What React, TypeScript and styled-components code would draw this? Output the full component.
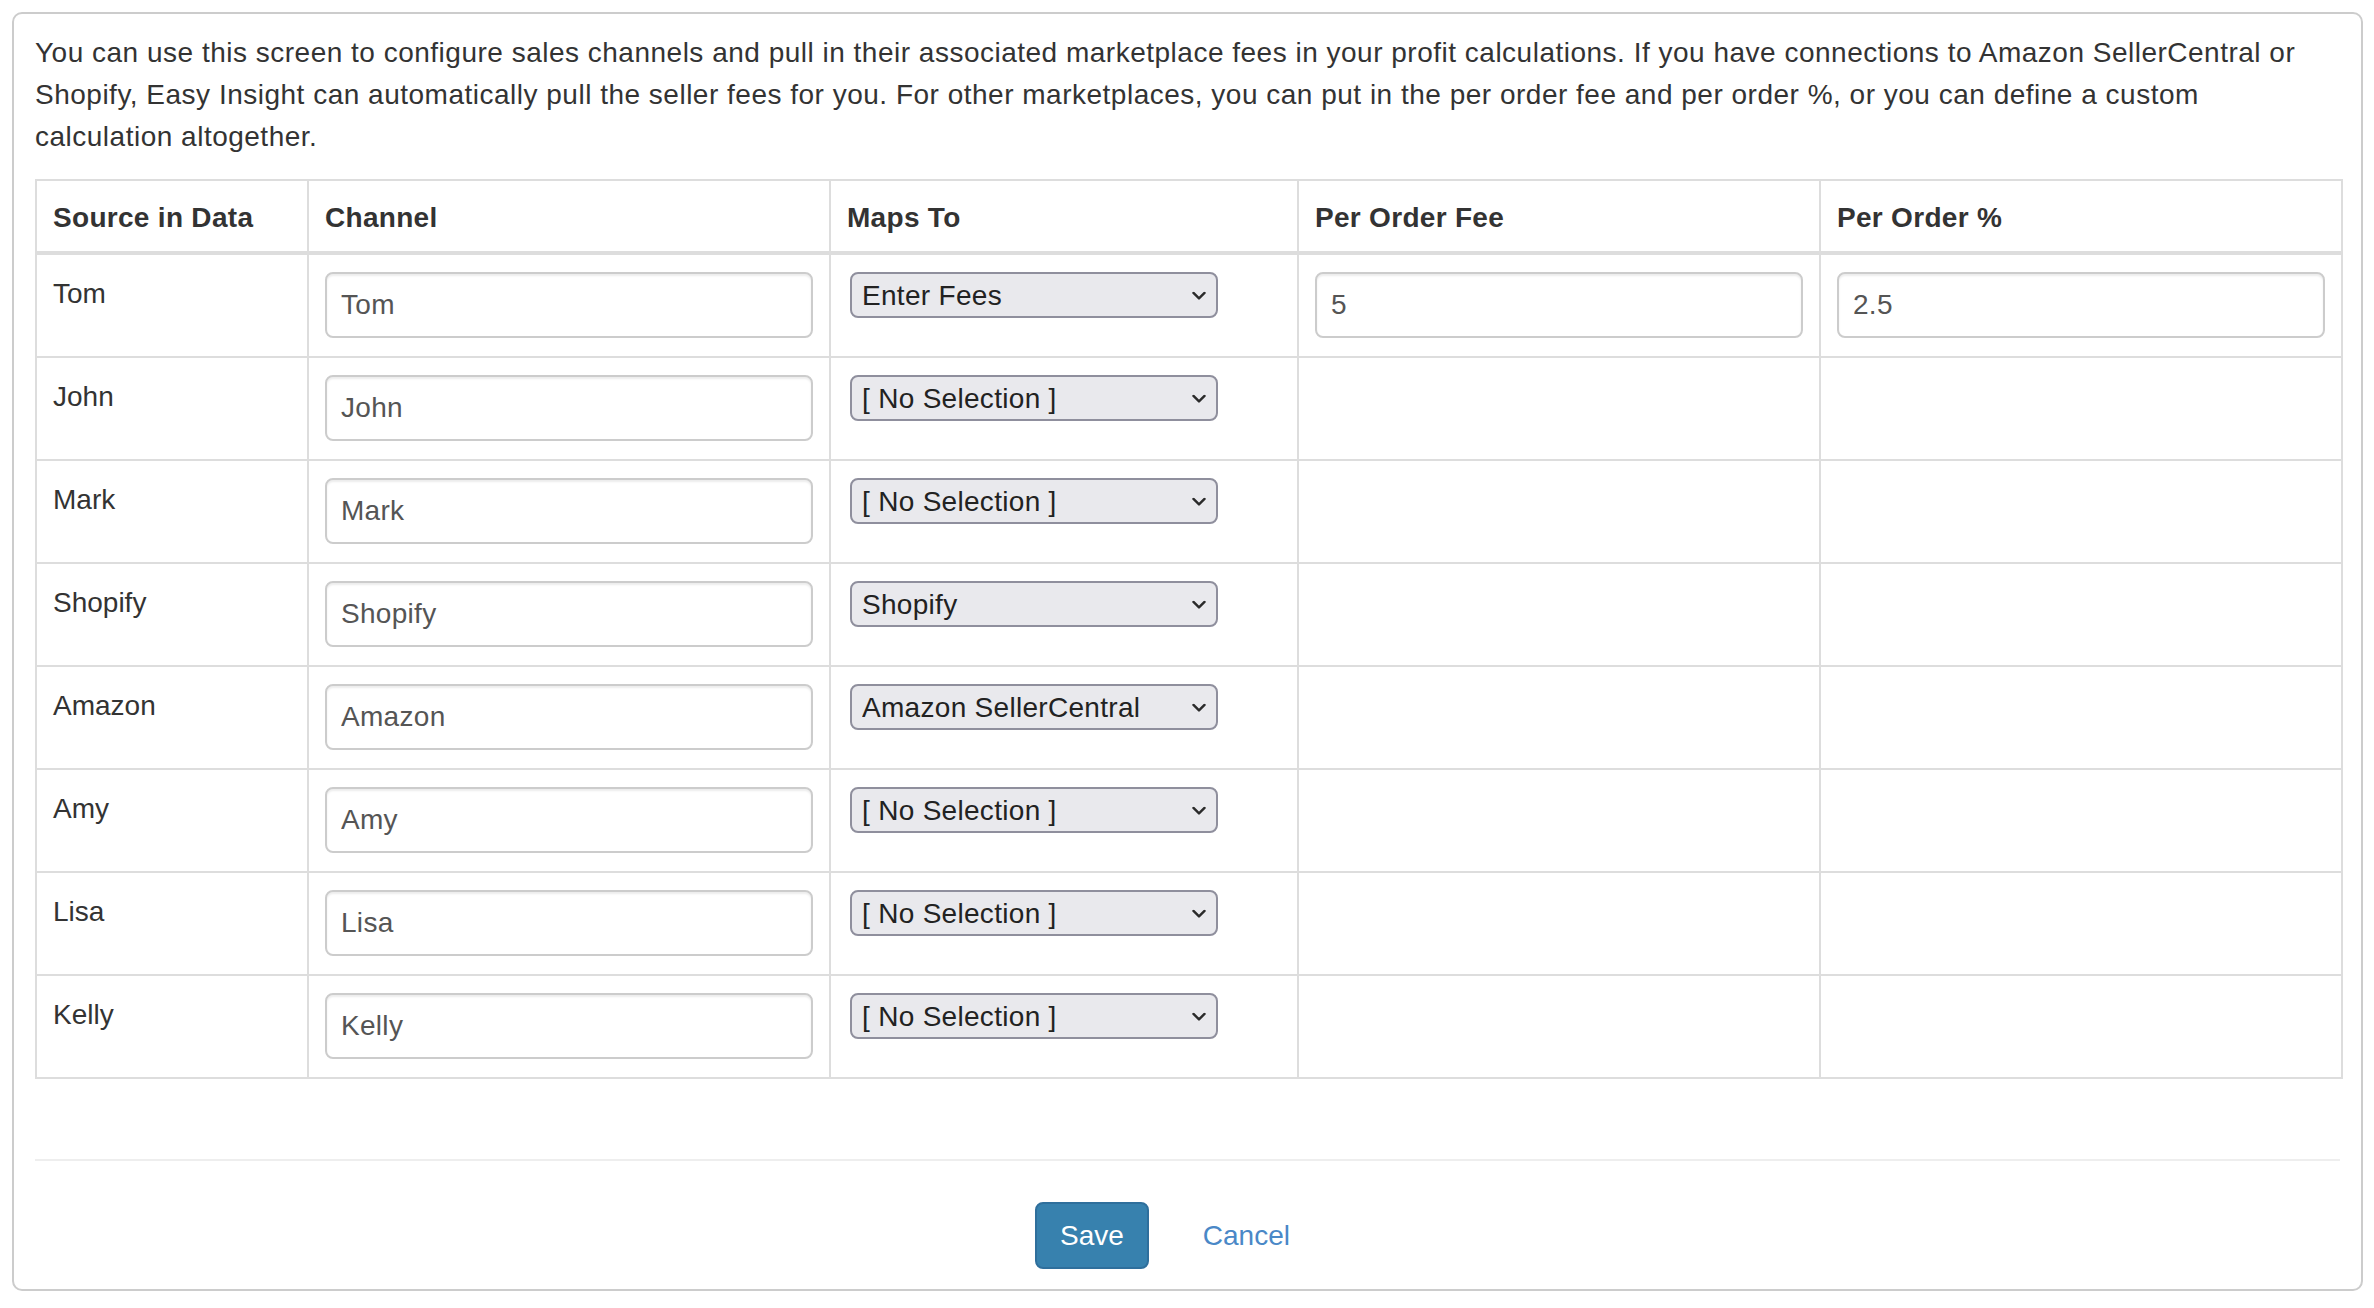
import styled, { createGlobalStyle } from "styled-components";

type Mapping = "Enter Fees" | "[ No Selection ]" | "Shopify" | "Amazon SellerCentral";

interface ChannelRow {
  source: string;
  mapsTo: Mapping;
  fee?: string;
  percent?: string;
}

const rows: ChannelRow[] = [
  { source: "Tom", mapsTo: "Enter Fees", fee: "5", percent: "2.5" },
  { source: "John", mapsTo: "[ No Selection ]" },
  { source: "Mark", mapsTo: "[ No Selection ]" },
  { source: "Shopify", mapsTo: "Shopify" },
  { source: "Amazon", mapsTo: "Amazon SellerCentral" },
  { source: "Amy", mapsTo: "[ No Selection ]" },
  { source: "Lisa", mapsTo: "[ No Selection ]" },
  { source: "Kelly", mapsTo: "[ No Selection ]" },
];

const options: Mapping[] = ["[ No Selection ]", "Enter Fees", "Shopify", "Amazon SellerCentral"];

const columns = [
  { label: "Source in Data", width: 272 },
  { label: "Channel", width: 522 },
  { label: "Maps To", width: 468 },
  { label: "Per Order Fee", width: 522 },
  { label: "Per Order %", width: 522 },
];

export default function App() {
  return (
    <Page>
      <GlobalStyle />
      <Card>
        <Intro>
          You can use this screen to configure sales channels and pull in their associated marketplace fees in your
          profit calculations. If you have connections to Amazon SellerCentral or Shopify, Easy Insight can
          automatically pull the seller fees for you. For other marketplaces, you can put in the per order fee and per
          order %, or you can define a custom calculation altogether.
        </Intro>

        <Table>
          <colgroup>
            {columns.map((c) => (
              <Col key={c.label} $width={c.width} />
            ))}
          </colgroup>
          <thead>
            <tr>
              {columns.map((c) => (
                <Th key={c.label}>{c.label}</Th>
              ))}
            </tr>
          </thead>
          <tbody>
            {rows.map((r) => (
              <tr key={r.source}>
                <Td>{r.source}</Td>
                <Td>
                  <TextInput defaultValue={r.source} />
                </Td>
                <Td>
                  <SelectWrap>
                    <Select defaultValue={r.mapsTo}>
                      {options.map((o) => (
                        <option key={o}>{o}</option>
                      ))}
                    </Select>
                    <Chevron width="14" height="9" viewBox="0 0 14 9">
                      <path d="M1.5 1.5 L7 7 L12.5 1.5" fill="none" stroke="#2b2b2b" strokeWidth="2.4" strokeLinecap="round" strokeLinejoin="round" />
                    </Chevron>
                  </SelectWrap>
                </Td>
                <Td>{r.fee !== undefined && <TextInput defaultValue={r.fee} />}</Td>
                <Td>{r.percent !== undefined && <TextInput defaultValue={r.percent} />}</Td>
              </tr>
            ))}
          </tbody>
        </Table>

        <Divider />

        <Footer>
          <SaveButton type="button">Save</SaveButton>
          <LinkButton type="button">Cancel</LinkButton>
        </Footer>
      </Card>
    </Page>
  );
}

const GlobalStyle = createGlobalStyle`
  html, body {
    margin: 0;
    padding: 0;
    background: #fff;
  }
  body {
    font-family: "Liberation Sans", Arial, Helvetica, sans-serif;
    color: #333;
  }
  * {
    box-sizing: border-box;
  }
`;

const Page = styled.div`
  padding: 12px 11px 0 12px;
`;

const Card = styled.div`
  border: 2px solid #ccc;
  border-radius: 10px;
  padding: 18px 21px 20px 21px;
  background: #fff;
`;

const Intro = styled.p`
  margin: 0 0 21px 0;
  font-size: 28px;
  letter-spacing: 0.5px;
  line-height: 42px;
  color: #333;
`;

const Table = styled.table`
  width: 100%;
  table-layout: fixed;
  border-collapse: collapse;
  border: 2px solid #ddd;
  font-size: 28px;
  line-height: 42px;
`;

const Col = styled.col<{ $width: number }>`
  width: ${(p) => p.$width}px;
`;

const Th = styled.th`
  text-align: left;
  font-weight: bold;
  letter-spacing: 0.3px;
  padding: 16px 16px 12px 16px;
  border: 2px solid #ddd;
  border-bottom: 4px solid #ddd;
  color: #333;
`;

const Td = styled.td`
  vertical-align: top;
  padding: 18px 16px 18px 16px;
  border: 2px solid #ddd;
  color: #333;
`;

const TextInput = styled.input`
  display: block;
  width: 100%;
  height: 66px;
  padding: 0 14px;
  margin-top: -1px;
  font-family: inherit;
  font-size: 28px;
  letter-spacing: 0.3px;
  color: #555;
  background: #fff;
  border: 2px solid #ccc;
  border-radius: 8px;
  box-shadow: inset 0 2px 2px rgba(0, 0, 0, 0.075);
  outline: none;
`;

const SelectWrap = styled.div`
  position: relative;
  width: 368px;
  margin-top: -1px;
  margin-left: 3px;
`;

const Select = styled.select`
  appearance: none;
  -webkit-appearance: none;
  display: block;
  width: 100%;
  height: 46px;
  padding: 0 40px 0 10px;
  font-family: inherit;
  font-size: 28px;
  letter-spacing: 0.3px;
  color: #222;
  background: #e9e9ed;
  border: 2px solid #8f8f9d;
  border-radius: 8px;
  outline: none;
`;

const Chevron = styled.svg`
  position: absolute;
  right: 12px;
  top: 50%;
  transform: translateY(-40%);
  pointer-events: none;
`;

const Divider = styled.hr`
  margin: 80px 0 0 0;
  border: 0;
  border-top: 2px solid #eee;
`;

const Footer = styled.div`
  display: flex;
  justify-content: center;
  align-items: center;
  gap: 30px;
  padding: 41px 26px 0 0;
`;

const SaveButton = styled.button`
  height: 67px;
  padding: 0 23px;
  font-family: inherit;
  font-size: 28px;
  color: #fff;
  background: #3781ae;
  border: 2px solid #2f6f9c;
  border-radius: 8px;
  cursor: pointer;
`;

const LinkButton = styled.button`
  height: 67px;
  padding: 0 24px;
  font-family: inherit;
  font-size: 28px;
  color: #4a88c7;
  background: transparent;
  border: 0;
  cursor: pointer;
`;
